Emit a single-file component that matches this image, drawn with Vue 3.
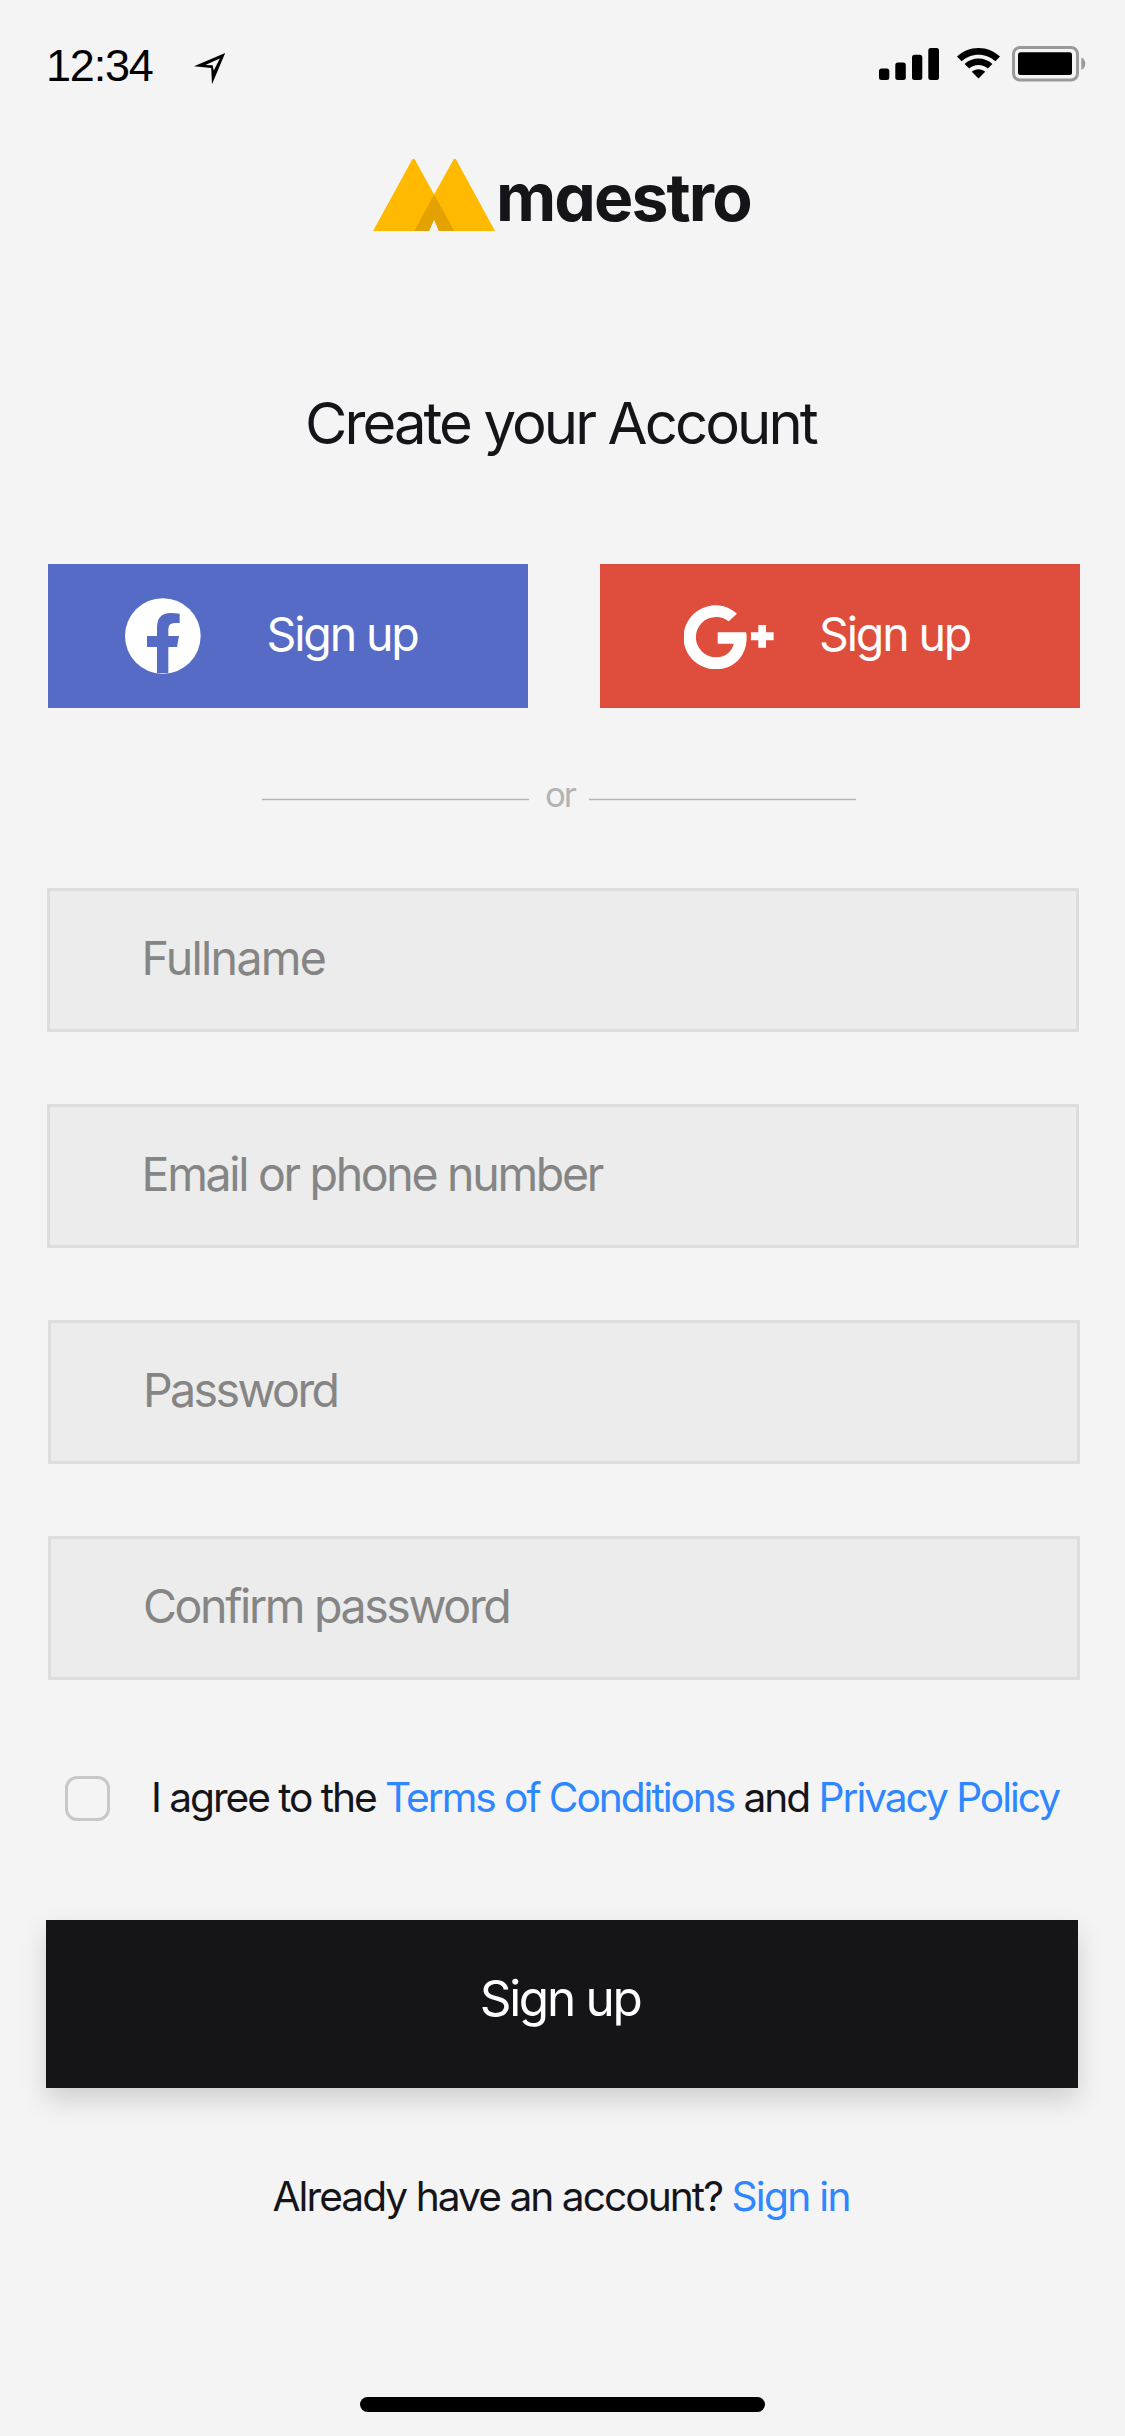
<script setup>
const fields = [
  { label: 'Fullname', kind: 'fullname' },
  { label: 'Email or phone number', kind: 'contact' },
  { label: 'Password', kind: 'password' },
  { label: 'Confirm password', kind: 'confirm' },
]
</script>

<template>
  <div class="screen">
    <header class="status">
      <div class="status-left">
        <span class="time">12:34</span>
        <svg class="location" width="32" height="32" viewBox="0 0 32 32">
          <path fill="#000" fill-rule="evenodd" d="M0 13.2 31.200 0 18 31.200 17.200 15ZM11.500 11.900 18.600 12.200 19.800 17.500 25.800 5.400Z" />
        </svg>
      </div>
      <div class="status-right">
        <svg class="signal" width="61" height="33" viewBox="0 0 61 33">
          <rect x="0" y="20.5" width="10.3" height="11.5" rx="2.5" />
          <rect x="16.3" y="14.5" width="10.5" height="17.5" rx="2.5" />
          <rect x="33" y="6.7" width="10.3" height="25.3" rx="2.5" />
          <rect x="49.3" y="0" width="10.7" height="32" rx="2.5" />
        </svg>
        <svg class="wifi" width="43" height="31" viewBox="0 0 43 31">
          <path d="M21.5 0C13.2 0 5.700 3.300 0 8.600L4.600 13.300C9 9.200 15 6.700 21.500 6.700S34 9.200 38.400 13.300L43 8.600C37.300 3.300 29.800 0 21.500 0Z" />
          <path d="M21.500 10.600C16.300 10.600 11.400 12.600 7.600 16L12.200 20.600C14.700 18.400 18 17.100 21.500 17.100S28.300 18.400 30.800 20.600L35.400 16C31.600 12.600 26.700 10.600 21.500 10.600Z" />
          <path d="M21.500 21.200C18.900 21.200 16.600 22.200 14.800 23.800L21.500 30.600 28.200 23.800C26.400 22.200 24.100 21.200 21.500 21.200Z" />
        </svg>
        <svg class="battery" width="75" height="36" viewBox="0 0 75 36">
          <rect x="1.500" y="1.500" width="64" height="32.500" rx="6.500" fill="none" stroke="#9a9a9a" stroke-width="3" />
          <rect x="6" y="6.200" width="54" height="22.800" rx="2.500" />
          <path fill="#9a9a9a" d="M69.300 11.500C71.800 12.500 73.300 15 73.300 17.700S71.800 22.900 69.300 24Z" />
        </svg>
      </div>
    </header>

    <div class="brand">
      <svg width="122" height="72" viewBox="0 0 122 72">
        <path fill="#ffba00" d="M39.500 0H41.500L61.100 35.500 80.800 0H82.800L122 72H66L61.100 60.500 56 72H0Z" />
        <path fill="#e3a200" d="M61.100 35.500 81.300 72H66L61.100 60.500 56 72H41.300Z" />
      </svg>
      <span class="wordmark">maestro</span>
    </div>

    <h1 class="title">Create your Account</h1>

    <div class="social">
      <button class="social-btn facebook">
        <svg width="76" height="76" viewBox="283 144 228 228">
          <circle cx="396.500" cy="258" r="113.500" fill="#fff" />
          <path fill="#566bc6" d="M447 191V219H432Q413 219 413 238V258H445L439 291H413V369H379V291H349V258H379V233Q379 189 420 189Q435 189 447 191Z" />
        </svg>
        <span>Sign up</span>
      </button>
      <button class="social-btn google">
        <svg width="90" height="64.300" viewBox="312 164 270 193">
          <path fill="#fff" d="M471 190 446 213Q430 200 408 200A60.500 60.500 0 1 0 408 321C440 321 457 300 461 280H413V246H498Q500 253 500 262C500 317 461 357 408 357A96 96 0 1 1 471 190Z" />
          <path fill="#fff" d="M535 224H558V246H581V270H558V292H535V270H513V246H535Z" />
        </svg>
        <span>Sign up</span>
      </button>
    </div>

    <div class="divider">
      <i></i>
      <span>or</span>
      <i></i>
    </div>

    <form class="form" @submit.prevent>
      <label v-for="field in fields" :key="field.kind" class="field" :class="field.kind">
        <span>{{ field.label }}</span>
      </label>
    </form>

    <div class="agree">
      <div class="checkbox"></div>
      <p>I agree to the <a>Terms of Conditions</a> and <a>Privacy Policy</a></p>
    </div>

    <button class="submit"><span>Sign up</span></button>

    <p class="signin">Already have an account? <a>Sign in</a></p>

    <div class="home-indicator"></div>
  </div>
</template>

<style>
html,
body {
  margin: 0;
  background: #f4f4f4;
}
</style>

<style scoped>
.screen {
  display: flex;
  flex-direction: column;
  width: 1125px;
  height: 2436px;
  overflow: hidden;
  background: #f4f4f4;
  color: #151419;
  font-family: Inter, "Liberation Sans", sans-serif;
  font-weight: 400;
  white-space: nowrap;
}
button {
  margin: 0;
  padding: 0;
  border: 0;
  border-radius: 0;
  color: #fff;
  font-family: inherit;
  font-weight: 400;
}
svg {
  display: block;
  flex: none;
}
p,
h1 {
  margin: 0;
}
a {
  color: #2e87ff;
}

.status {
  display: flex;
  justify-content: space-between;
  height: 159px;
  padding: 0 38.500px 0 46px;
  box-sizing: border-box;
}
.status-left,
.status-right {
  display: flex;
  align-items: flex-start;
}
.time {
  width: 107px;
  margin-top: 41px;
  color: #000;
  font: 45px/50px "Liberation Sans", Arial, sans-serif;
  letter-spacing: -1.200px;
}
.location {
  margin: 53px 0 0 41px;
}
.signal {
  margin-top: 48px;
}
.wifi {
  margin: 48px 0 0 17px;
}
.battery {
  margin: 46px 0 0 12px;
}

.brand {
  display: flex;
  align-items: flex-start;
  height: 72px;
  padding-left: 373px;
}
.wordmark {
  margin: 5px 0 0 1px;
  font-size: 66px;
  font-weight: 700;
  line-height: 66px;
  letter-spacing: -1.900px;
  font-feature-settings: "cv11";
}

.title {
  margin: 162px 0 0 305px;
  font-size: 58px;
  font-weight: 400;
  line-height: 60px;
  letter-spacing: -2.900px;
}

.social {
  display: flex;
  gap: 72px;
  margin: 111px 0 0 48px;
}
.social-btn {
  display: flex;
  align-items: flex-start;
  width: 480px;
  height: 144px;
  font-size: 46.500px;
  line-height: 46px;
  letter-spacing: -2.150px;
}
.social-btn span {
  margin-top: 47px;
}
.facebook {
  padding-left: 76.500px;
  background: #566bc6;
}
.facebook svg {
  margin: 34px 66px 0 0;
}
.google {
  padding-left: 84.300px;
  background: #df4d3c;
}
.google svg {
  margin: 40.700px 44.700px 0 0;
}

.divider {
  display: flex;
  align-items: flex-start;
  height: 36px;
  margin: 68px 0 0 262px;
  color: #b3b3b3;
}
.divider i {
  width: 267px;
  height: 1px;
  margin-top: 23px;
  background: #b3b3b3;
  box-shadow: 0 1px #e6e6e6, 0 -1px #e6e6e6;
}
.divider span {
  width: 60px;
  padding-left: 16px;
  box-sizing: border-box;
  font-size: 34.800px;
  line-height: 36px;
  letter-spacing: -2px;
}

.form {
  display: flex;
  flex-direction: column;
  gap: 72px;
  margin-top: 76px;
}
.field {
  width: 1032px;
  height: 144px;
  margin-left: 48px;
  padding: 43px 0 0 92px;
  box-sizing: border-box;
  border: 3px solid #dddddd;
  background: #ececec;
  color: #858585;
  font-size: 46.500px;
  line-height: 48px;
}
.fullname,
.contact {
  margin-left: 46.500px;
}
.fullname {
  letter-spacing: -1.700px;
}
.contact {
  letter-spacing: -2.320px;
}
.password {
  letter-spacing: -2.600px;
}
.confirm {
  letter-spacing: -2.370px;
}

.agree {
  display: flex;
  align-items: flex-start;
  gap: 41.500px;
  height: 45px;
  margin: 96px 0 0 64.500px;
  font-size: 40.700px;
  line-height: 44px;
}
.checkbox {
  flex: none;
  width: 45px;
  height: 45px;
  box-sizing: border-box;
  border: 3px solid #c8c8c8;
  border-radius: 12px;
}
.agree p {
  letter-spacing: -2.060px;
}

.submit {
  display: flex;
  align-items: flex-start;
  width: 1032px;
  height: 168px;
  margin: 99px 0 0 46px;
  padding: 53px 0 0 433.700px;
  background: #151419;
  box-shadow: 0 12px 24px rgba(0, 0, 0, 0.15);
  font-size: 49.500px;
  line-height: 50px;
  letter-spacing: -2.300px;
}

.signin {
  margin: 87px 0 0 272.500px;
  font-size: 40.700px;
  line-height: 44px;
  letter-spacing: -1.970px;
}
.signin a {
  letter-spacing: -1.700px;
}

.home-indicator {
  width: 405px;
  height: 15px;
  margin: 178px 0 0 360px;
  border-radius: 7.500px;
  background: #000;
}
</style>
